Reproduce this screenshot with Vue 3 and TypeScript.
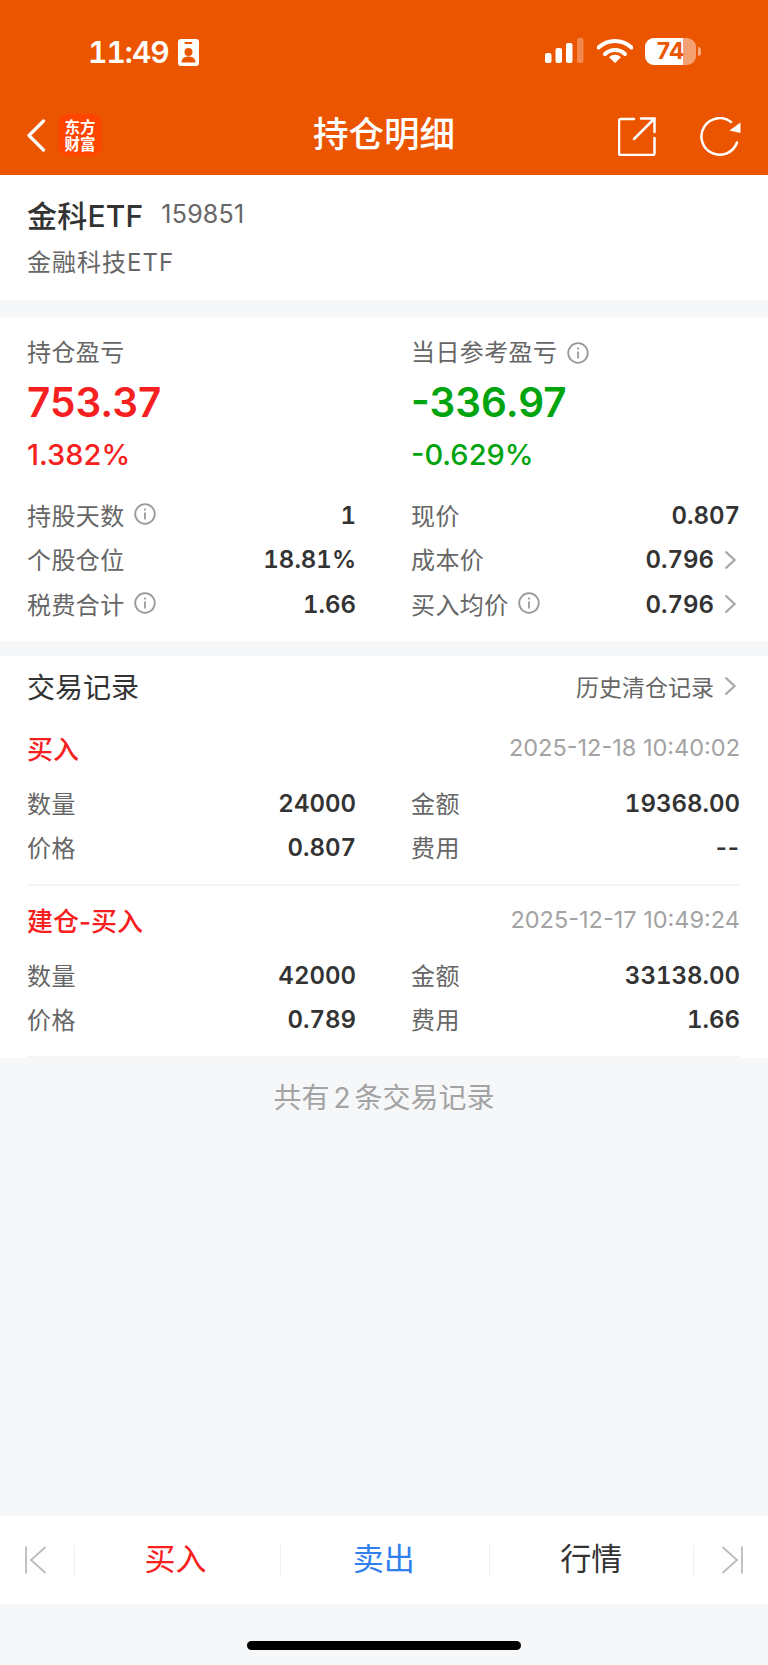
<script setup lang="ts">
interface Stat { label: string; value: string; info?: boolean; arrow?: boolean }
interface Trade { kind: string; time: string; qty: string; amount: string; price: string; fee: string }

const stats: Stat[][] = [
  [{ label: '持股天数', value: '1', info: true }, { label: '现价', value: '0.807' }],
  [{ label: '个股仓位', value: '18.81%' }, { label: '成本价', value: '0.796', arrow: true }],
  [{ label: '税费合计', value: '1.66', info: true }, { label: '买入均价', value: '0.796', info: true, arrow: true }],
]
const trades: Trade[] = [
  { kind: '买入', time: '2025-12-18 10:40:02', qty: '24000', amount: '19368.00', price: '0.807', fee: '--' },
  { kind: '建仓-买入', time: '2025-12-17 10:49:24', qty: '42000', amount: '33138.00', price: '0.789', fee: '1.66' },
]
</script>

<template>
  <div class="page">
    <header class="header">
      <div class="status">
        <div class="status-left">
          <span class="clock">11:49</span>
          <svg class="id-icon" width="21" height="27" viewBox="0 0 21 27">
            <rect width="21" height="27" rx="3" fill="#fff" />
            <rect x="6.500" y="3" width="8" height="2" rx="1" fill="#eb5500" />
            <circle cx="10.500" cy="13" r="4" fill="#eb5500" />
            <path d="M3.500 23.500c0-4 3-6 7-6s7 2 7 6z" fill="#eb5500" />
          </svg>
        </div>
        <div class="status-right">
          <svg width="39" height="26" viewBox="0 0 39 26">
            <rect x="0" y="15" width="6.500" height="10" rx="2" fill="#fff" />
            <rect x="10.500" y="10" width="6.500" height="15" rx="2" fill="#fff" />
            <rect x="21" y="5" width="6.500" height="20" rx="2" fill="#fff" />
            <rect x="32" y="0" width="6.500" height="25" rx="2" fill="#fff" opacity=".3" />
          </svg>
          <svg class="wifi" width="36" height="26" viewBox="0 0 36 26">
            <path d="M1.500 9.500a24 24 0 0 1 33 0" fill="none" stroke="#fff" stroke-width="4" stroke-linecap="round" />
            <path d="M8 16a14.500 14.500 0 0 1 20 0" fill="none" stroke="#fff" stroke-width="4" stroke-linecap="round" />
            <path d="M18 25l-6-5.800a8.500 8.500 0 0 1 12 0z" fill="#fff" />
          </svg>
          <div class="battery">
            <div class="battery-fill"></div>
            <span class="battery-num">74</span>
          </div>
          <span class="battery-nub"></span>
        </div>
      </div>
      <nav class="nav">
        <div class="nav-left">
          <svg width="20" height="33" viewBox="0 0 20 33">
            <path d="M17.500 2L3 16.500 17.500 31" fill="none" stroke="#fff" stroke-width="3.200" stroke-linecap="round" stroke-linejoin="round" />
          </svg>
          <div class="logo"><span>东方</span><span>财富</span></div>
        </div>
        <h1 class="nav-title">持仓明细</h1>
        <div class="nav-right">
          <svg width="38" height="39" viewBox="0 0 38 39">
            <path d="M36.500 21v15a2 2 0 0 1-2 2H3a2 2 0 0 1-2-2V4a2 2 0 0 1 2-2h13" fill="none" stroke="#fff" stroke-width="2.500" stroke-linecap="round" />
            <path d="M16 22L35 3M23 1.500h13.500V15" fill="none" stroke="#fff" stroke-width="2.500" stroke-linecap="round" />
          </svg>
          <svg width="41" height="39" viewBox="0 0 41 39">
            <path d="M37 25.500A18.300 18.300 0 1 1 31 5" fill="none" stroke="#fff" stroke-width="2.500" stroke-linecap="round" />
            <path d="M40.500 5.500v10.500l-11-2.500z" fill="#fff" />
          </svg>
        </div>
      </nav>
    </header>

    <section class="card name-card">
      <div class="name-line"><span class="name">金科ETF</span><span class="code">159851</span></div>
      <div class="fullname">金融科技ETF</div>
    </section>

    <section class="card summary">
      <div class="pl-grid">
        <div class="pl">
          <div class="pl-label">持仓盈亏</div>
          <div class="pl-value up">753.37</div>
          <div class="pl-rate up">1.382%</div>
        </div>
        <div class="pl">
          <div class="pl-label">当日参考盈亏
            <svg class="info" viewBox="0 0 22 22"><circle cx="11" cy="11" r="9.800" /><path d="M11 9.500v7M11 5.500v2" /></svg>
          </div>
          <div class="pl-value down">-336.97</div>
          <div class="pl-rate down">-0.629%</div>
        </div>
      </div>
      <div v-for="(row, i) in stats" :key="i" class="row-pair stat-pair">
        <div v-for="s in row" :key="s.label" class="kv">
          <span class="k">{{ s.label }}
            <svg v-if="s.info" class="info" viewBox="0 0 22 22"><circle cx="11" cy="11" r="9.800" /><path d="M11 9.500v7M11 5.500v2" /></svg>
          </span>
          <span class="v" :class="{ 'with-arrow': s.arrow }">{{ s.value }}
            <svg v-if="s.arrow" class="chev" viewBox="0 0 12 20"><path d="M1.500 1.500L10.500 10 1.500 18.500" /></svg>
          </span>
        </div>
      </div>
    </section>

    <section class="card records">
      <div class="rec-head">
        <span class="rec-title">交易记录</span>
        <span class="rec-link">历史清仓记录
          <svg class="chev" viewBox="0 0 12 20"><path d="M1.500 1.500L10.500 10 1.500 18.500" /></svg>
        </span>
      </div>
      <div v-for="t in trades" :key="t.time" class="trade">
        <div class="trade-head"><span class="kind">{{ t.kind }}</span><span class="time">{{ t.time }}</span></div>
        <div class="row-pair trade-pair">
          <div class="kv"><span class="k">数量</span><span class="v">{{ t.qty }}</span></div>
          <div class="kv"><span class="k">金额</span><span class="v">{{ t.amount }}</span></div>
        </div>
        <div class="row-pair trade-pair">
          <div class="kv"><span class="k">价格</span><span class="v">{{ t.price }}</span></div>
          <div class="kv"><span class="k">费用</span><span class="v" :class="{ dashes: t.fee === '--' }">{{ t.fee }}</span></div>
        </div>
      </div>
    </section>

    <p class="total">共有 2 条交易记录</p>
    <div class="spacer"></div>

    <div class="toolbar">
      <div class="tool-edge">
        <svg width="22" height="28" viewBox="0 0 22 28"><path d="M1 0.500v27M20.500 1L6 14l14.500 13" /></svg>
      </div>
      <div class="tool buy">买入</div>
      <div class="tool sell">卖出</div>
      <div class="tool quote">行情</div>
      <div class="tool-edge tool-edge-r">
        <svg width="22" height="28" viewBox="0 0 22 28"><path d="M21 0.500v27M1.500 1L16 14 1.500 27" /></svg>
      </div>
    </div>
    <div class="home-area"><span class="home-bar"></span></div>
  </div>
</template>

<style>
html, body { margin: 0; padding: 0; background: #f6f7f9; }
</style>

<style scoped>
.page {
  width: 768px;
  height: 1665px;
  display: flex;
  flex-direction: column;
  background: #f6f7f9;
  font-family: Inter, "Noto Sans CJK SC", sans-serif;
  color: #333;
  overflow: hidden;
}
.header { height: 175px; background: #eb5500; color: #fff; flex: none; }
.status {
  height: 94px;
  box-sizing: border-box;
  padding: 38px 67px 0 88px;
  display: flex;
  justify-content: space-between;
}
.status-left { display: flex; align-items: flex-start; gap: 9px; }
.clock { font-size: 30px; font-weight: 600; line-height: 27px; letter-spacing: -1px; margin-top: 1px; font-variant-numeric: tabular-nums; }
.id-icon { margin-top: 1px; }
.status-right { display: flex; align-items: flex-start; }
.wifi { margin-left: 13px; }
.battery {
  position: relative;
  width: 51px;
  height: 27px;
  margin-left: 12px;
  border-radius: 9px;
  background: rgba(255, 255, 255, 0.45);
  overflow: hidden;
}
.battery-fill { width: 38px; height: 100%; background: #fff; }
.battery-num {
  position: absolute;
  inset: 0;
  text-align: center;
  font-size: 23px;
  line-height: 27px;
  font-weight: 700;
  color: #eb5500;
}
.battery-nub {
  width: 3px;
  height: 9px;
  margin: 9px 0 0 2px;
  background: rgba(255, 255, 255, 0.5);
  border-radius: 0 3px 3px 0;
}
.nav { height: 81px; position: relative; display: flex; align-items: flex-start; justify-content: space-between; padding: 0 27px 0 26px; }
.nav-left { display: flex; align-items: center; gap: 13px; margin-top: 20px; }
.logo {
  width: 42px;
  height: 42px;
  border-radius: 9px;
  background: #ff4400;
  display: flex;
  flex-direction: column;
  align-items: center;
  justify-content: center;
  font-size: 15.500px;
  line-height: 17px;
  font-weight: 700;
  font-family: "Noto Sans CJK SC", sans-serif;
}
.nav-title {
  position: absolute;
  left: 0;
  right: 0;
  top: 18px;
  margin: 0;
  text-align: center;
  font-size: 35.500px;
  line-height: 46px;
  font-weight: 500;
}
.nav-right { display: flex; gap: 44px; margin-top: 23px; }

.card { background: #fff; flex: none; padding: 0 28px 0 27px; }
.name-card { height: 125px; box-sizing: border-box; padding-top: 19px; }
.name-line { display: flex; align-items: center; height: 40px; }
.name { font-size: 30px; font-weight: 500; color: #333; letter-spacing: 0.2px; }
.code { margin-left: 18px; font-size: 25px; color: #666; letter-spacing: 0.2px; }
.fullname { margin-top: 9px; font-size: 24px; line-height: 40px; color: #666; letter-spacing: 1px; }

.summary { margin-top: 17px; height: 324px; box-sizing: border-box; padding-top: 18px; }
.pl-grid, .row-pair { display: grid; grid-template-columns: 329px 329px; column-gap: 55px; }
.pl-grid { height: 158px; }
.pl-label { display: flex; align-items: center; gap: 10px; font-size: 24px; line-height: 36px; color: #666; letter-spacing: 0.4px; }
.pl-value { margin-top: 7px; font-size: 40.500px; line-height: 50px; font-weight: 600; }
.pl-rate { margin-top: 7px; font-size: 29px; line-height: 40px; font-weight: 500; }
.up { color: #f72020; }
.down { color: #00a40e; }
.stat-pair, .trade-pair { height: 44.500px; }
.kv { display: flex; align-items: center; justify-content: space-between; }
.k { display: flex; align-items: center; gap: 9px; font-size: 24px; color: #666; letter-spacing: 0.4px; margin-bottom: 2px; }
.v { display: flex; align-items: center; font-size: 24px; font-weight: 600; color: #333; font-variant-numeric: tabular-nums; }
.dashes { font-variant-numeric: normal; letter-spacing: 1px; }
.with-arrow { margin-right: 4px; }
.chev { width: 12px; height: 20px; margin-left: 10px; fill: none; stroke: #aaa; stroke-width: 2.400; }
.info { width: 22px; height: 22px; fill: none; stroke: #999; stroke-width: 1.800; flex: none; }

.records { margin-top: 15px; height: 402px; box-sizing: border-box; }
.rec-head { height: 58px; display: flex; align-items: center; justify-content: space-between; }
.rec-title { font-size: 28px; color: #333; margin-top: 2px; }
.rec-link { display: flex; align-items: center; font-size: 23px; color: #666; margin: 2px 4px 0 0; }
.trade { height: 172px; box-sizing: border-box; border-bottom: 2px solid #f5f5f5; padding-top: 11px; }
.trade-head { height: 44px; display: flex; align-items: center; justify-content: space-between; margin-bottom: 12px; }
.kind { font-size: 26px; font-weight: 500; color: #f72020; }
.time { font-size: 23.500px; color: #a3a3a3; }

.total { margin: 20px 0 0; text-align: center; font-size: 28px; line-height: 40px; color: #a3a3a3; word-spacing: -4px; flex: none; }
.spacer { flex: 1; }

.toolbar {
  height: 88px;
  flex: none;
  background: #fff;
  display: grid;
  grid-template-columns: 74px 206px 208.500px 205.500px 74px;
  align-items: center;
}
.tool-edge { display: flex; padding-left: 25px; }
.tool-edge-r { padding-left: 27px; }
.tool-edge svg { fill: none; stroke: #bbb; stroke-width: 1.800; }
.tool {
  height: 31px;
  line-height: 27px;
  font-size: 31px;
  text-align: center;
  border-left: 1px solid #eee;
}
.quote { border-right: 1px solid #eee; color: #333; }
.buy { color: #f72020; padding-right: 4px; }
.sell { color: #2f80ed; padding-right: 2px; }
.home-area { height: 61px; flex: none; display: flex; justify-content: center; padding-top: 37px; box-sizing: border-box; }
.home-bar { width: 274px; height: 9px; border-radius: 5px; background: #000; }
</style>
